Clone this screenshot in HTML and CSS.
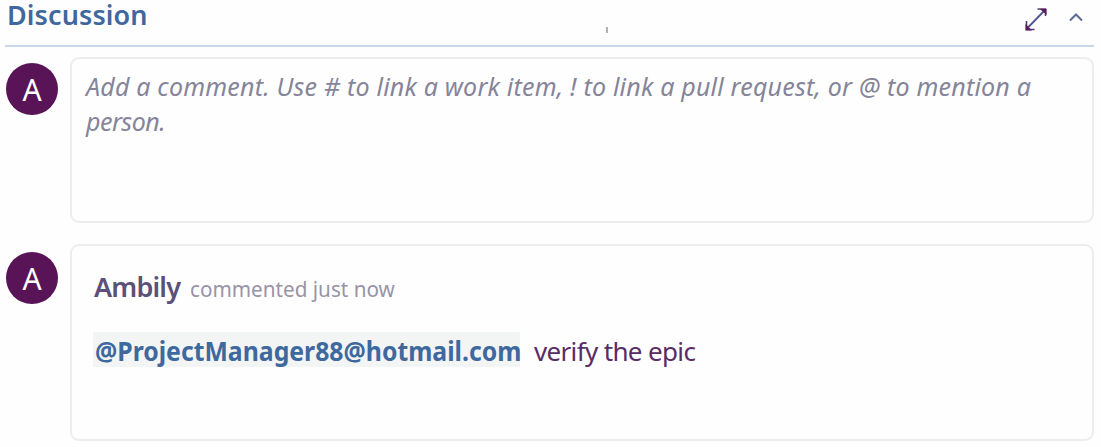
FILE: index.html
```html
<!DOCTYPE html>
<html lang="en">
<head>
<meta charset="utf-8">
<title>Discussion</title>
<link rel="stylesheet" href="styles.css">
</head>
<body>
<section class="discussion">
  <header class="head">
    <h2 class="title">Discussion</h2>
    <span class="speck"></span>
    <svg class="expand" width="26" height="26" viewBox="0 0 26 26" fill="none">
      <path class="shaft" d="M4 22.500L21.500 4.500"/>
      <path class="tip" d="M14.500 3H22.500V10"/>
      <path class="tail" d="M3.500 15V23.500H11.500"/>
      <path class="corner" d="M17 3H23.500V9L21.500 7L19 5Z"/>
      <path class="corner" d="M2.500 18L9 24.500H2.500Z"/>
    </svg>
    <svg class="chevron" width="16" height="10" viewBox="0 0 16 10" fill="none"><path d="M2 8.500L8 2.500L14 8.500"/></svg>
  </header>
  <div class="row">
    <div class="avatar">A</div>
    <div class="box editor">
      <p class="hint"><span class="line first">Add a comment. Use # to link a work item, ! to link a pull request, or @ to mention a</span> <span class="line second">person.</span></p>
    </div>
  </div>
  <div class="row posted">
    <div class="avatar">A</div>
    <div class="box comment">
      <div class="meta"><span class="author">Ambily</span><span class="when">commented just now</span></div>
      <div class="body"><span class="mention"><span class="handle">@ProjectManager88@hotmail.com</span></span><span class="message">verify the epic</span></div>
    </div>
  </div>
</section>
</body>
</html>
```
FILE: styles.css
```css
* { box-sizing: border-box; }
body { margin: 0; background: #fefefe; font-family: "Noto Sans", "Open Sans", sans-serif; }
.discussion { width: 1101px; height: 447px; padding: 0 7px 0 5px; overflow: hidden; }
.head { display: flex; align-items: flex-start; height: 47px; border-bottom: 2px solid #c7d8e8; }
.title { margin: 0 0 0 2px; width: 599px; font-size: 27px; line-height: 30px; font-weight: 600; letter-spacing: 0.1px; color: #40689f; white-space: nowrap; }
.speck { width: 2px; height: 6px; margin-top: 27px; background: #b5b2b5; }
.expand { margin: 6px 0 0 415px; }
.shaft { stroke: #52558b; stroke-width: 1.8; }
.tip { stroke: #5a3b6c; stroke-width: 1.6; }
.tail { stroke: #5a3b6c; stroke-width: 1.6; }
.corner { fill: #5a1b62; }
.chevron { margin: 12px 0 0 19px; stroke: #596c94; stroke-width: 2; }
.row { display: flex; align-items: flex-start; margin-top: 10px; padding-left: 1px; }
.avatar { width: 52px; height: 52px; margin-top: 6px; border-radius: 50%; background: #591357; color: #fff; font-size: 30px; line-height: 53px; text-align: center; }
.box { width: 1025px; margin-left: 12px; border: 2px solid #ededed; border-radius: 9px; }
.editor { height: 166px; padding: 10px 14px; }
.hint { margin: 0; font-size: 25px; line-height: 35px; font-style: italic; color: #858498; white-space: nowrap; }
.line { display: block; width: max-content; transform-origin: 0 50%; }
.first { letter-spacing: 0.2px; }
.second { letter-spacing: -0.5px; }
.posted { margin-top: 21px; }
.posted .avatar { margin-top: 8px; }
.comment { height: 197px; padding: 23px 21px; }
.meta { display: flex; align-items: baseline; height: 36px; line-height: 36px; white-space: nowrap; }
.author { width: 97px; padding-left: 1px; font-size: 27px; font-weight: 600; letter-spacing: -0.8px; color: #5c5079; }
.when { font-size: 22px; color: #9994a6; transform: scaleX(0.94); transform-origin: 0 50%; }
.body { display: flex; margin-top: 27px; line-height: 35px; white-space: nowrap; }
.mention { width: 427px; height: 35px; padding-left: 2px; background: #f3f4f4; font-size: 27px; line-height: 37px; font-weight: 700; color: #3e699f; }
.handle { display: inline-block; transform: scaleX(0.918); transform-origin: 0 50%; }
.message { margin-left: 14px; font-size: 26px; line-height: 38px; letter-spacing: -0.65px; color: #592c65; }
```
